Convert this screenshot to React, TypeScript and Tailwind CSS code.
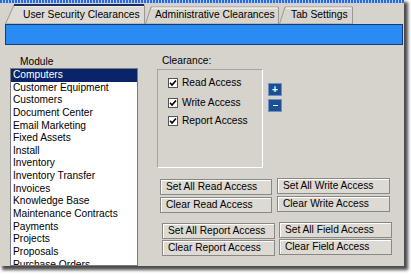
import React from "react";

const modules = [
  "Computers",
  "Customer Equipment",
  "Customers",
  "Document Center",
  "Email Marketing",
  "Fixed Assets",
  "Install",
  "Inventory",
  "Inventory Transfer",
  "Invoices",
  "Knowledge Base",
  "Maintenance Contracts",
  "Payments",
  "Projects",
  "Proposals",
  "Purchase Orders",
];

function Tab({ label, width, active, slant, textPad }: { label: string; width: number; active?: boolean; slant: number; textPad: number }) {
  const h = active ? 20 : 18;
  return (
    <div className="relative shrink-0" style={{ width, height: h }}>
      <svg className="absolute inset-0" width={width} height={h}>
        <polygon
          points={`0.5,${h} ${slant},1 ${width - 0.5},1 ${width - 0.5},${h}`}
          fill={active ? "#dedbd4" : "#d8d5ce"}
          stroke="#9a9890"
          strokeWidth="1"
        />
        <line x1={slant + 1} y1={2} x2={width - 1.5} y2={2} stroke="#ffffff" strokeWidth="1" />
        {active && <line x1={slant} y1={1} x2={width - 1} y2={1} stroke="#1b2a5c" strokeWidth="2" />}
      </svg>
      <div
        className="relative text-[10.3px] leading-[12px] text-black whitespace-nowrap"
        style={{ paddingLeft: textPad, paddingTop: active ? 5 : 3 }}
      >
        {label}
      </div>
    </div>
  );
}

function Btn({ label, w }: { label: string; w: string }) {
  return (
    <div
      className={`${w} h-[16px] bg-[#dddad4] border border-[#8a8882] shadow-[inset_1px_1px_0_#ffffff] pl-[5px] text-[10.2px] leading-[14px] text-black whitespace-nowrap`}
    >
      {label}
    </div>
  );
}

function Check({ label }: { label: string }) {
  return (
    <div className="flex items-center h-[12px]">
      <div className="w-[10px] h-[10px] bg-white border border-[#555555] flex items-center justify-center">
        <svg width="8" height="8" viewBox="0 0 8 8">
          <polyline points="1,3.8 3,6 7,1.5" fill="none" stroke="#000" strokeWidth="1.6" />
        </svg>
      </div>
      <span className="ml-[4px] text-[10.2px] leading-[12px] text-black whitespace-nowrap">{label}</span>
    </div>
  );
}

export default function App() {
  return (
    <div className="relative w-[411px] h-[275px] bg-white overflow-hidden font-['Liberation_Sans',Arial,sans-serif]">
      <div className="w-[404px] h-[266px] bg-[#d6d3cd] shadow-[3px_3px_3px_1px_rgba(0,0,0,0.7)] flex flex-col overflow-hidden">
        <div className="h-[3px] shrink-0 bg-[repeating-linear-gradient(90deg,#2e6be0_0px,#2e6be0_2px,#a9c8ff_2px,#a9c8ff_3px)]" />
        <div className="h-[21px] shrink-0 flex items-end pl-[5px]">
          <Tab label="User Security Clearances" width={140} active slant={9} textPad={18} />
          <Tab label="Administrative Clearances" width={134} slant={6} textPad={10} />
          <Tab label="Tab Settings" width={74} slant={6} textPad={12} />
        </div>
        <div className="h-[21px] shrink-0 ml-[5px] mr-[1px] bg-[#2a8cf2] border border-[#163a78]" />
        <div className="flex flex-1 min-h-0">
          <div className="w-[138px] shrink-0 pl-[10px] flex flex-col">
            <div className="pt-[11px] h-[23px] pl-[10px] text-[10.2px] leading-[12px] text-black">Module</div>
            <div className="flex-1 min-h-0 bg-white border border-[#7a7a7a] overflow-hidden pt-0">
              {modules.map((m, i) => (
                <div
                  key={m}
                  className={`h-[12.65px] pl-[2px] text-[10.2px] leading-[12.65px] whitespace-nowrap ${
                    i === 0 ? "bg-[#0a246a] text-white" : "text-black"
                  }`}
                >
                  {m}
                </div>
              ))}
            </div>
          </div>
          <div className="ml-[19px] flex flex-col">
            <div className="pt-[10px] h-[24px] pl-[5px] text-[10.2px] leading-[12px] text-black">Clearance:</div>
            <div className="flex">
              <div className="w-[106px] h-[99px] border border-t-[#a6a49e] border-l-[#a6a49e] border-r-white border-b-white pl-[10px] pt-[7px] flex flex-col">
                <Check label="Read Access" />
                <div className="h-[8px]" />
                <Check label="Write Access" />
                <div className="h-[6px]" />
                <Check label="Report Access" />
              </div>
              <div className="ml-[5px] pt-[14px] flex flex-col gap-[3px]">
                <div className="w-[14px] h-[13px] bg-[#1d4f93] border border-[#6f8fbf] flex items-center justify-center text-white text-[10px] font-bold leading-none">+</div>
                <div className="w-[14px] h-[13px] bg-[#1d4f93] border border-[#6f8fbf] flex items-center justify-center">
                  <div className="w-[5px] h-[1.5px] bg-white" />
                </div>
              </div>
            </div>
            <div className="flex mt-[10px] ml-[3px] gap-[5px] items-start">
              <div className="flex flex-col gap-[2px] pt-[1px]">
                <Btn label="Set All Read Access" w="w-[112px]" />
                <Btn label="Clear Read Access" w="w-[112px]" />
              </div>
              <div className="flex flex-col gap-[2px]">
                <Btn label="Set All Write Access" w="w-[113px]" />
                <Btn label="Clear Write Access" w="w-[113px]" />
              </div>
            </div>
            <div className="flex mt-[9px] ml-[5px] gap-[4px] items-start">
              <div className="flex flex-col gap-[1px] pt-[1px]">
                <Btn label="Set All Report Access" w="w-[113px]" />
                <Btn label="Clear Report Access" w="w-[113px]" />
              </div>
              <div className="flex flex-col gap-[1px]">
                <Btn label="Set All Field Access" w="w-[113px]" />
                <Btn label="Clear Field Access" w="w-[113px]" />
              </div>
            </div>
          </div>
        </div>
      </div>
    </div>
  );
}
